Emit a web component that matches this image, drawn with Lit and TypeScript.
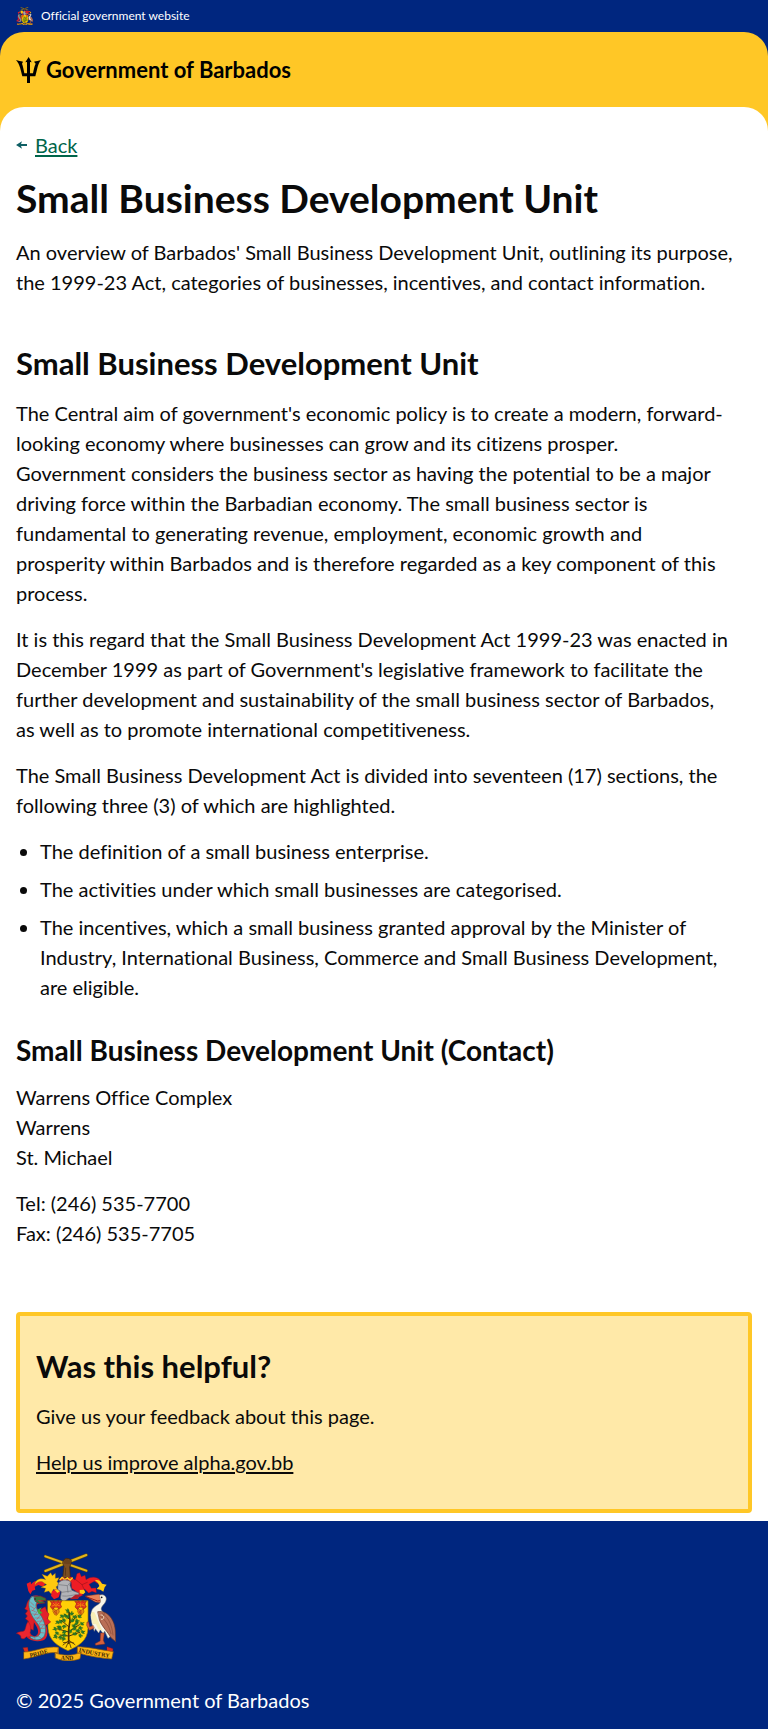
import { LitElement, html, svg, css } from "lit";
import { customElement } from "lit/decorators.js";

@customElement("coat-of-arms")
class CoatOfArms extends LitElement {
  static styles = css`
    :host {
      display: block;
      flex: none;
    }
    svg {
      display: block;
      width: 100%;
      height: auto;
    }
    .motto {
      font: 700 18px "Liberation Serif", serif;
      fill: #3a2608;
    }
  `;

  private leaf(x: number, y: number, turn: number) {
    return svg`<path d="M${x} ${y} l-5 -3 l-6 1 l3 4 l-4 4 l6 -1 l5 2 z" transform="rotate(${turn} ${x} ${y})"/>`;
  }

  private flower(x: number) {
    return svg`
      <g transform="translate(${x} 212)">
        <path d="M-17 -5 L-7 -2 L-10 -7 L0 -3 L9 -8 L7 -2 L17 -5 L13 4 L17 13 L8 20 L5 14 L-5 14 L-9 21 L-17 13 L-13 4 Z" fill="#e0301e" stroke="#8d2110" stroke-width="1.5"/>
        <path d="M-8 2 L-2 8 M8 2 L2 8 M0 1 V13 M-12 10 L-5 8 M12 10 L5 8" fill="none" stroke="#ffb400" stroke-width="1.8"/>
        <path d="M-7 18 L0 24 L8 18 L10 28 L2 38 L-4 36 L-9 27 Z" fill="#e98a13" stroke="#8c3b0b" stroke-width="1.5"/>
        <path d="M0 22 L1 34 M-5 25 L-2 31" fill="none" stroke="#a52614" stroke-width="2"/>
      </g>`;
  }

  render() {
    return html`
      <svg viewBox="48 63 300 324" role="img" aria-label="Coat of arms of Barbados">
        <g stroke-linecap="round" stroke-linejoin="round">
          <path d="M136 73 L259 116 M136 117 L259 69" stroke="#6d5206" stroke-width="9" fill="none"/>
          <path d="M136 73 L259 116 M136 117 L259 69" stroke="#e2b51c" stroke-width="6" fill="none"/>
          <path d="M191 84 L198 79 L207 80 L214 85 L213 96 L209 105 L211 137 L188 137 L192 103 L188 94 Z" fill="#7b4d22" stroke="#3c220b" stroke-width="2"/>
          <path d="M195 83 V94 M201 82 V95 M207 84 V95 M197 108 L196 130" stroke="#3c220b" stroke-width="1.5" fill="none"/>

          <path d="M80 155 L92 149 L93 157 C101 146 115 144 126 148 L136 154 L130 164 L115 159 L104 164 L106 173 L97 176 L91 187 L85 177 Z" fill="#ed1c24"/>
          <path d="M105 159 C104 145 120 136 137 143 L126 127 L142 133 L152 122 L157 131 L166 124 L166 139 L177 137 L171 149 L180 158 L168 164 L174 178 L160 172 L154 186 L146 177 L133 181 L137 169 L123 166 L140 158 L127 149 C116 147 109 151 105 159 Z" fill="#ffc90e" stroke="#a77308" stroke-width="1"/>
          <path d="M156 178 L169 171 L181 181 L176 196 L162 202 L153 191 Z" fill="#ed1c24"/>
          <path d="M164 174 L181 169 L180 178 L172 183 Z" fill="#ffc90e"/>

          <path d="M213 141 L226 144 L231 125 L239 122 L244 134 L255 130 L258 143 C273 132 291 134 299 143 L306 157 L292 154 L283 148 L267 157 L274 169 L288 168 L289 182 L276 178 L266 183 L254 171 L245 179 L248 190 L237 195 L228 178 L215 169 Z" fill="#ed1c24" stroke="#a2121a" stroke-width="1"/>
          <path d="M285 145 C294 141 302 147 306 155 L320 158 L314 166 L310 179 L301 173 L290 171 L298 162 L294 153 Z" fill="#ffc90e"/>
          <path d="M239 174 L252 173 L256 181 L250 187 L239 184 Z" fill="#ffc90e"/>
          <path d="M226 142 L246 158 L262 151 M246 158 L252 171" fill="none" stroke="#9e141b" stroke-width="2"/>

          <path d="M177 144 L185 134 L199 139 L214 134 L224 145 L213 151 L192 151 Z" fill="#e32622"/>
          <path d="M180 143 L187 136 L194 144 L202 137 L210 145 L217 138" fill="none" stroke="#ffd21b" stroke-width="4"/>
          <path d="M174 157 C176 143 203 139 212 150 L210 160 L216 175 L237 183 L235 198 L207 198 L191 210 L181 199 L184 179 L174 173 Z" fill="#b2b3b7" stroke="#5c5c60" stroke-width="2"/>
          <path d="M176 158 L203 161 L210 152 M185 181 L214 177 M188 192 C202 195 224 187 235 187 M202 163 L204 181" fill="none" stroke="#74757a" stroke-width="2"/>
          <path d="M209 202 L226 188 L239 188 L234 201 Z" fill="#b51e27"/>

          <path d="M143 206 H264 V289 C262 327 236 342 204 356 C171 342 146 324 144 289 Z" fill="#ffd006" stroke="#a17a05" stroke-width="2"/>
          ${this.flower(168)} ${this.flower(242)}

          <g fill="none" stroke="#4c3308">
            <path d="M207 241 L210 265 L206 292 L206 334" stroke-width="5"/>
            <path d="M207 285 L184 265 M208 274 L230 254 M206 300 L174 291 M208 298 L238 278 M206 312 L180 309 M207 312 L239 301 M209 263 L194 247" stroke-width="3"/>
            <path d="M206 326 L189 339 M206 328 L198 346 M207 328 L213 347 M207 325 L225 338 M201 331 L190 332 M211 331 L221 333" stroke-width="2.5"/>
          </g>
          <g fill="#2c7a25" stroke="#185219" stroke-width="0.8">
            ${[[207,240,60],[213,250,130],[201,251,20],[220,258,160],[191,251,0],[234,256,170],[226,266,210],[216,271,120],[197,264,10],[187,269,20],[178,269,0],[195,279,320],[181,282,340],[171,291,20],[184,292,60],[194,295,300],[218,285,160],[229,280,110],[241,277,180],[236,287,210],[222,295,120],[196,306,330],[176,302,0],[183,311,310],[172,313,10],[230,300,150],[243,301,190],[236,309,220],[220,309,160],[207,258,70],[214,302,80],[193,316,320]].map(
              ([x, y, turn]) => this.leaf(x, y, turn)
            )}
          </g>

          <path d="M121 232 L136 224 L141 239 L147 246 L142 260 L152 270 L140 279 L122 276 Z" fill="#e3202b" stroke="#98131b" stroke-width="1.5"/>
          <path d="M87 203 C78 213 82 222 74 230 L83 236 L76 245 L82 252 L76 260 L85 267 L83 286 L100 295 L104 252 Z" fill="#e02029" stroke="#97151b" stroke-width="1.5"/>
          <path d="M94 193 C110 187 127 194 130 204 L121 213 L112 217 C106 229 122 246 132 267 C147 293 145 318 130 325 C104 333 79 323 75 304 L88 301 C94 312 106 318 113 306 C119 292 104 274 93 257 C81 237 84 209 94 193 Z" fill="#e02029"/>
          <path d="M94 195 C106 190 119 194 126 202 L113 209 C103 216 109 232 120 247 C136 270 141 297 132 313 C121 329 94 327 83 307 C97 319 116 318 121 302 C125 282 105 269 95 249 C86 230 82 208 94 195 Z" fill="#69c0ca" stroke="#2a7480" stroke-width="2"/>
          <path d="M92 211 L102 220 M91 222 L103 230 M94 234 L106 239 M98 246 L114 248 M105 258 L121 258 M112 268 L128 267 M117 279 L132 278 M119 289 L134 289 M118 301 L132 303 M111 310 L123 318 M101 313 L106 322 M108 225 L97 237 M113 237 L103 251 M121 249 L111 262 M128 260 L118 275 M134 275 L122 291" stroke="#c93842" stroke-width="1.4" fill="none"/>
          <path d="M103 194 L121 192 L137 199 L138 207 L124 205 L136 213 L117 215 L106 208 Z" fill="#37793e" stroke="#851d25" stroke-width="2"/>
          <path d="M113 204 L133 207 L119 209 Z" fill="#e52b25"/>
          <circle cx="105" cy="201" r="2" fill="#111"/>
          <path d="M112 233 L125 226 L120 236 L128 243 L116 247 Z" fill="#4eab35"/>
          <path d="M84 269 C93 278 94 291 90 303 C98 313 88 318 79 314 C75 320 68 322 63 318 C64 311 57 306 49 304 C57 298 66 300 72 297 C79 290 76 279 84 269 Z" fill="#ea2630" stroke="#a9141d" stroke-width="1.5"/>

          <path d="M257 192 L295 187 L306 190 L302 212 L286 210 Z" fill="#e98258" stroke="#8e341b" stroke-width="1.5"/>
          <path d="M258 194 L293 207 L300 206" stroke="#a31d14" stroke-width="3" fill="none"/>
          <path d="M299 190 C309 184 322 193 318 205 C315 219 297 225 306 237 C330 254 341 289 334 311 L324 319 L314 297 L310 306 L301 293 L296 303 L286 290 L283 298 C274 270 268 250 277 232 C287 218 303 217 302 207 Z" fill="#f8f5e8" stroke="#8f8b7c" stroke-width="1.5"/>
          <path d="M272 249 C275 237 283 235 286 247 L301 282 L307 296 L294 291 L288 277 L279 276 Z" fill="#f7edb6"/>
          <path d="M294 239 C323 233 345 265 346 298 L347 329 L333 317 C323 299 306 284 299 266 Z" fill="#b96f56" stroke="#693726" stroke-width="2"/>
          <path d="M306 244 C325 253 336 280 339 309 M301 252 C319 266 327 283 333 305 M314 242 L308 256" stroke="#7a402d" stroke-width="1.6" fill="none"/>
          <path d="M303 249 C315 248 313 265 304 262" stroke="#efe0c8" stroke-width="3" fill="none"/>
          <circle cx="305" cy="196" r="2.6" fill="#111"/>
          <path d="M282 289 L268 295 L260 280 L261 270 L266 270 L269 284 L279 281 Z M302 303 L313 303 L310 325 L315 336 L287 340 L285 335 L300 327 Z" fill="#d7603c" stroke="#7e2e1c" stroke-width="1.5"/>

          <path d="M69 347 L83 346 L85 359 L75 362 Z M321 344 L339 350 L338 361 L321 360 Z" fill="#dd2d20" stroke="#831b13"/>
          <path d="M165 345 L176 347 L176 366 L165 366 Z M232 345 L244 344 L245 366 L232 366 Z" fill="#dd7e17"/>
          <path d="M72 360 C102 360 138 341 175 346 L173 362 C139 358 111 376 72 381 Z M233 344 C269 345 300 353 340 359 L335 381 C303 378 267 373 233 362 Z M166 363 C192 372 216 372 243 361 L240 380 C216 389 191 389 166 378 Z" fill="#fdb515" stroke="#8d5708" stroke-width="2"/>
          <path id="pride" d="M90 376 C108 375 127 364 156 361" fill="none"/>
          <path id="and" d="M182 382 C196 385 212 385 232 380" fill="none"/>
          <path id="industry" d="M236 359 C265 366 300 374 340 378" fill="none"/>
        </g>
        <text class="motto"><textPath href="#pride">PRIDE</textPath></text>
        <text class="motto"><textPath href="#and">AND</textPath></text>
        <text class="motto"><textPath href="#industry">INDUSTRY</textPath></text>
      </svg>
    `;
  }
}

@customElement("app-root")
class AppRoot extends LitElement {
  static styles = css`
    :host {
      display: block;
      color: #0a0a0a;
      background: #fff;
      font: 400 20px/30px Lato, "Open Sans", sans-serif;
      font-variant-ligatures: none;
    }
    h1,
    h2,
    h3,
    p,
    ul {
      margin: 0;
    }
    h1 {
      font-size: 39px;
      line-height: 46px;
    }
    h2 {
      font-size: 31px;
      line-height: 37px;
    }
    h3 {
      margin-top: 16px;
      font-size: 28px;
      line-height: 32px;
    }
    a {
      color: inherit;
      text-decoration-thickness: 2px;
      text-underline-offset: 2px;
    }
    .official {
      display: flex;
      align-items: center;
      gap: 8px;
      height: 32px;
      padding: 0 16px;
      background: #00267f;
      color: #fff;
      font-size: 12px;
      line-height: 16px;
    }
    .official coat-of-arms {
      width: 17px;
    }
    .blue {
      background: #00267f;
    }
    .yellow {
      background: #ffc726;
    }
    .rounded {
      border-radius: 24px 24px 0 0;
    }
    .brand {
      display: flex;
      align-items: center;
      gap: 5px;
      padding: 24px 16px;
      color: #000;
      font-size: 22px;
      font-weight: 700;
      line-height: 27px;
    }
    .trident {
      width: 25px;
      height: 26px;
    }
    main {
      display: flex;
      flex-direction: column;
      padding: 23px 16px 8px;
      background: #fff;
    }
    .back {
      display: flex;
      align-items: center;
      align-self: flex-start;
      gap: 8px;
      margin-bottom: 15px;
      color: #00654a;
      text-decoration: none;
    }
    .back span {
      text-decoration: underline 2px;
      text-underline-offset: 2px;
    }
    .arrow {
      width: 11px;
      height: 8px;
    }
    .lead {
      margin: 16px 0 48px;
    }
    .stack {
      display: flex;
      flex-direction: column;
      gap: 16px;
    }
    article {
      padding-right: 20px;
    }
    ul {
      display: flex;
      flex-direction: column;
      gap: 8px;
      padding-left: 24px;
    }
    .feedback {
      margin-top: 64px;
      padding: 32px 16px;
      border: 4px solid #ffc726;
      border-radius: 4px;
      background: #ffe9a8;
    }
    .feedback a {
      align-self: flex-start;
    }
    footer {
      display: flex;
      flex-direction: column;
      gap: 24px;
      padding: 32px 16px 16px;
      background: #00267f;
      color: #fff;
    }
    footer coat-of-arms {
      width: 100px;
    }
  `;

  render() {
    return html`
      <div class="official">
        <coat-of-arms></coat-of-arms>
        <span>Official government website</span>
      </div>
      <div class="blue">
        <header class="yellow rounded">
          <div class="brand">
            <svg class="trident" viewBox="48 170 75 78" aria-hidden="true">
              <path d="M86 170 L95 186 L90 185 V219 H99 C101 208 103 198 107 190 L102 184 C109 182 116 182 123 179 C113 191 112 207 106 228 H90 V248 H81 V228 H67 C62 210 60 192 48 179 C55 182 62 182 69 184 L66 190 C69 198 71 208 73 219 H81 V185 L76 186 Z"/>
            </svg>
            <span>Government of Barbados</span>
          </div>
        </header>
      </div>
      <div class="yellow">
        <main class="rounded">
          <a class="back" href="#">
            <svg class="arrow" viewBox="0 0 11 8" aria-hidden="true">
              <path d="M0 4 L6 0.2 L5 3 H11 V5 H5 L6 7.8 Z" fill="#0e5f64" />
            </svg>
            <span>Back</span>
          </a>
          <h1>Small Business Development Unit</h1>
          <p class="lead">
            An overview of Barbados' Small Business Development Unit, outlining its purpose, the
            1999-23 Act, categories of businesses, incentives, and contact information.
          </p>
          <article class="stack">
            <h2>Small Business Development Unit</h2>
            <p>
              The Central aim of government's economic policy is to create a modern,
              forward-looking economy where businesses can grow and its citizens prosper.
              Government considers the business sector as having the potential to be a major
              driving force within the Barbadian economy. The small business sector is fundamental
              to generating revenue, employment, economic growth and prosperity within Barbados and
              is therefore regarded as a key component of this process.
            </p>
            <p>
              It is this regard that the Small Business Development Act 1999-23 was enacted in
              December 1999 as part of Government's legislative framework to facilitate the further
              development and sustainability of the small business sector of Barbados, as well as
              to promote international competitiveness.
            </p>
            <p>
              The Small Business Development Act is divided into seventeen (17) sections, the
              following three (3) of which are highlighted.
            </p>
            <ul>
              <li>The definition of a small business enterprise.</li>
              <li>The activities under which small businesses are categorised.</li>
              <li>
                The incentives, which a small business granted approval by the Minister of
                Industry, International Business, Commerce and Small Business Development, are
                eligible.
              </li>
            </ul>
            <h3>Small Business Development Unit (Contact)</h3>
            <p>Warrens Office Complex<br />Warrens<br />St. Michael</p>
            <p>Tel: (246) 535-7700<br />Fax: (246) 535-7705</p>
          </article>
          <section class="feedback stack">
            <h2>Was this helpful?</h2>
            <p>Give us your feedback about this page.</p>
            <a href="#">Help us improve alpha.gov.bb</a>
          </section>
        </main>
      </div>
      <footer>
        <coat-of-arms></coat-of-arms>
        <p>© 2025 Government of Barbados</p>
      </footer>
    `;
  }
}
